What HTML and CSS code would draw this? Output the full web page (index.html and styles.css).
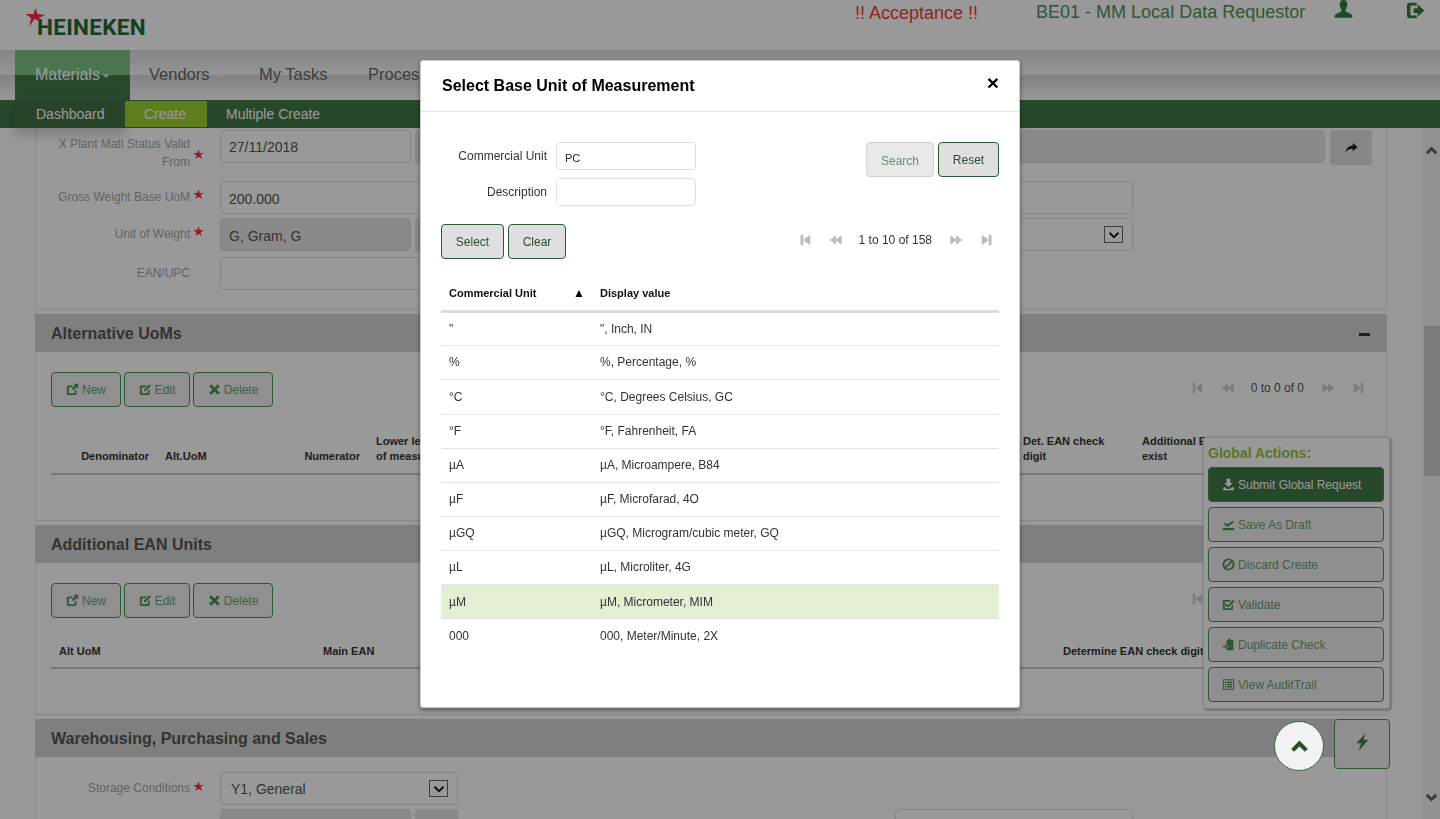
FILE: index.html
```html
<!DOCTYPE html>
<html lang="en">
<head>
    <meta charset="UTF-8">
    <meta name="viewport" content="width=device-width, initial-scale=1.0">
    <title>Select Base Unit of Measurement</title>
    <link rel="stylesheet" href="styles.css">
</head>
<body>
    <svg class="icon-defs" aria-hidden="true">
        <symbol id="i-star" viewBox="0 0 16 16"><path d="M8 .5l1.900 5.300h5.600l-4.500 3.400 1.700 5.500L8 11.400l-4.700 3.300 1.700-5.500L.5 5.800h5.600z"/></symbol>
        <symbol id="i-user" viewBox="0 0 16 16"><path d="M8 0C5.900 0 4.800 1.600 4.800 3.800c0 1.600.6 3.200 1.500 4.100v1.500L1.900 11.700C1 12.200.6 12.900.6 13.600V15h14.800v-1.400c0-.7-.4-1.400-1.300-1.900L9.700 9.400V7.900c.9-.9 1.500-2.500 1.500-4.100C11.200 1.600 10.100 0 8 0z"/></symbol>
        <symbol id="i-logout" viewBox="0 0 16 16"><path d="M3 1.500h6v2.300H4.200c-.3 0-.5.2-.5.5v7.400c0 .3.2.5.5.5H9v2.300H3c-1.300 0-2.200-.9-2.200-2.200V3.700C.8 2.400 1.700 1.500 3 1.500z"/><path d="M6.500 6h3.300V2.800L15.400 8l-5.600 5.200V10H6.500z"/></symbol>
        <symbol id="i-share" viewBox="0 0 16 16"><path d="M9.500 2.500L15.500 7.500l-6 5V9.600C6 9.600 3 10.500.8 13.500 1.300 8.800 4.600 5.800 9.500 5.400z"/></symbol>
        <symbol id="i-new" viewBox="0 0 16 16"><path d="M3 3h5v2.200H3.800c-.3 0-.5.2-.5.5v6.500c0 .3.200.5.500.5h6.500c.3 0 .5-.2.500-.5V9H13v4c0 1-.8 1.700-1.700 1.700H2.800C1.800 14.700 1 14 1 13V5c0-1.100.9-2 2-2z"/><path d="M9 1h6v6l-2-2-4 4-2-2 4-4z"/></symbol>
        <symbol id="i-edit" viewBox="0 0 16 16"><path d="M3 3h7L8 5.200H3.800c-.3 0-.5.2-.5.5v6.500c0 .3.200.5.500.5h6.500c.3 0 .5-.2.500-.5V9.500l2.200-2V13c0 1-.8 1.700-1.700 1.700H2.800C1.800 14.700 1 14 1 13V5c0-1.100.9-2 2-2z"/><path d="M13 1.500l1.800 1.800-6.300 6.300-2.600.8.8-2.600z"/></symbol>
        <symbol id="i-remove" viewBox="0 0 16 16"><path d="M4 1.500L8 5.500l4-4L14.500 4l-4 4 4 4-2.500 2.500-4-4-4 4L1.500 12l4-4-4-4z"/></symbol>
        <symbol id="i-first" viewBox="0 0 16 16"><path d="M3 2h3v12H3zM14 2v12L6 8z"/></symbol>
        <symbol id="i-prev" viewBox="0 0 16 16"><path d="M8 2.500v4.700l6.500-4.700v11L8 8.800v4.700L.8 8z"/></symbol>
        <symbol id="i-next" viewBox="0 0 16 16"><path d="M8 2.500v4.700L1.500 2.500v11L8 8.800v4.700L15.200 8z"/></symbol>
        <symbol id="i-last" viewBox="0 0 16 16"><path d="M13 2h-3v12h3zM2 2v12l8-6z"/></symbol>
        <symbol id="i-import" viewBox="0 0 16 16"><path d="M5.800 1h4.400v5h3L8 11 2.800 6h3z"/><path d="M1.500 11.500h2.300L6 13.500h4l2.200-2h2.300V15h-13z"/></symbol>
        <symbol id="i-saved" viewBox="0 0 16 16"><path d="M1 12.300h14V15H1z"/><path d="M1.800 6.800l2.800-.8 1.700 2 7.500-4.500 1.200 1.300L6.300 11.200z"/></symbol>
        <symbol id="i-ban" viewBox="0 0 16 16"><circle cx="8" cy="8" r="6.300" fill="none" stroke="currentColor" stroke-width="2.400"/><path d="M3.500 11.200L11.200 3.500l1.400 1.400-7.700 7.700z"/></symbol>
        <symbol id="i-check" viewBox="0 0 16 16"><path d="M3 2.500h8.500L9.500 4.700H3.800c-.3 0-.5.2-.5.5v7c0 .3.200.5.500.5h7c.3 0 .5-.2.500-.5V10l2.200-2v5.200c0 .9-.8 1.700-1.700 1.700H2.800c-1 0-1.800-.8-1.800-1.700V4.300C1 3.300 1.800 2.500 3 2.500z"/><path d="M4.500 6.800l2.800 2.100 6.300-6.400 1.900 1.900-8.200 7.400-4.400-3.400z"/></symbol>
        <symbol id="i-clip" viewBox="0 0 16 16"><path d="M7.500 1h3v1.500h2.500c.6 0 1 .4 1 1V14c0 .6-.4 1-1 1H6.500c-.6 0-1-.4-1-1v-2.500H8V9.500H5.500V4c0-.8.400-1.500 1-1.500h1z"/><path d="M1 9.500h3V8l3 2.500L4 13v-1.500H1z"/></symbol>
        <symbol id="i-list" viewBox="0 0 16 16"><path fill-rule="evenodd" d="M1 1.500h14v13H1zM2.200 2.700v10.600h11.600V2.700z"/><path d="M3.500 4.200h1.800V6H3.500zM6.300 4.200h6.200V6H6.300zM3.500 7h1.800v1.800H3.500zM6.300 7h6.200v1.800H6.300zM3.500 9.800h1.800v1.800H3.500zM6.300 9.800h6.200v1.800H6.300z"/></symbol>
        <symbol id="i-flash" viewBox="0 0 16 16"><path d="M11.500 0L3 9h4.200L5 16l8.500-10H9z"/></symbol>
        <symbol id="i-chevron-up" viewBox="0 0 16 16"><path d="M8 3l7 7-2.500 2.500L8 8l-4.500 4.500L1 10z"/></symbol>
        <symbol id="i-chevron-down" viewBox="0 0 16 16"><path d="M8 13L1 6l2.500-2.500L8 8l4.500-4.500L15 6z"/></symbol>
        <symbol id="i-select" viewBox="0 0 16 16"><polyline points="2,5 8,11 14,5" fill="none" stroke="currentColor" stroke-width="2.400"/></symbol>
    </svg>

    <div class="app">
        <header class="top-bar">
            <div class="logo">
                <svg class="logo-star" viewBox="0 0 20 19"><path d="M10 0l2 6 8 1-6 2.500-1 3.500-4-2-5 7.500L5.500 10 0 6l8 0z"/></svg>
                <span class="logo-text">HEINEKEN</span>
            </div>
            <span class="env-label">!! Acceptance !!</span>
            <span class="role-label">BE01 - MM Local Data Requestor</span>
            <svg class="top-icon user-icon"><use href="#i-user"/></svg>
            <svg class="top-icon logout-icon"><use href="#i-logout"/></svg>
        </header>

        <nav class="main-nav">
            <a class="nav-link active">Materials<span class="caret"></span></a>
            <a class="nav-link vendors">Vendors<span class="caret faint"></span></a>
            <a class="nav-link tasks">My Tasks</a>
            <a class="nav-link">Processes</a>
        </nav>

        <nav class="sub-nav">
            <a class="sub-link first">Dashboard</a>
            <a class="sub-link current">Create</a>
            <a class="sub-link">Multiple Create</a>
        </nav>

        <div class="scroll-area">
            <main class="content">
                <section class="panel first-panel">
                    <div class="form-row tall">
                        <label class="form-label">X Plant Matl Status Valid From</label><span class="req"><svg class="star"><use href="#i-star"/></svg></span>
                        <div class="field w-190">27/11/2018</div>
                        <div class="addon"></div>
                        <div class="field locked w-wide"></div>
                        <div class="share-btn"><svg class="icon"><use href="#i-share"/></svg></div>
                    </div>
                    <div class="form-row">
                        <label class="form-label">Gross Weight Base UoM</label><span class="req"><svg class="star"><use href="#i-star"/></svg></span>
                        <div class="field w-full">200.000</div>
                    </div>
                    <div class="form-row">
                        <label class="form-label">Unit of Weight</label><span class="req"><svg class="star"><use href="#i-star"/></svg></span>
                        <div class="field locked w-190">G, Gram, G</div>
                        <div class="addon"></div>
                        <div class="field w-rest"><span class="select-arrow"><svg><use href="#i-select"/></svg></span></div>
                    </div>
                    <div class="form-row last">
                        <label class="form-label">EAN/UPC</label><span class="req"></span>
                        <div class="field w-full-short"></div>
                    </div>
                </section>

                <section>
                    <h2 class="panel-heading">Alternative UoMs<span class="collapse-bar"></span></h2>
                    <div class="panel uom-panel">
                        <div class="toolbar">
                            <div class="btn-group">
                                <a class="btn w-new"><svg class="icon"><use href="#i-new"/></svg>New</a>
                                <a class="btn w-edit"><svg class="icon"><use href="#i-edit"/></svg>Edit</a>
                                <a class="btn w-delete"><svg class="icon"><use href="#i-remove"/></svg>Delete</a>
                            </div>
                            <div class="pager">
                                <svg class="pager-icon"><use href="#i-first"/></svg>
                                <svg class="pager-icon"><use href="#i-prev"/></svg>
                                <span class="pager-text">0 to 0 of 0</span>
                                <svg class="pager-icon"><use href="#i-next"/></svg>
                                <svg class="pager-icon"><use href="#i-last"/></svg>
                            </div>
                        </div>
                        <div class="grid-head uom-head">
                            <span class="right">Denominator</span>
                            <span>Alt.UoM</span>
                            <span class="right">Numerator</span>
                            <span>Lower level unit of measure</span>
                            <span></span>
                            <span>Det. EAN check digit</span>
                            <span>Additional EAN exist</span>
                        </div>
                    </div>
                </section>

                <section>
                    <h2 class="panel-heading">Additional EAN Units</h2>
                    <div class="panel ean-panel">
                        <div class="toolbar">
                            <div class="btn-group">
                                <a class="btn w-new"><svg class="icon"><use href="#i-new"/></svg>New</a>
                                <a class="btn w-edit"><svg class="icon"><use href="#i-edit"/></svg>Edit</a>
                                <a class="btn w-delete"><svg class="icon"><use href="#i-remove"/></svg>Delete</a>
                            </div>
                            <div class="pager">
                                <svg class="pager-icon"><use href="#i-first"/></svg>
                                <svg class="pager-icon"><use href="#i-prev"/></svg>
                                <span class="pager-text">0 to 0 of 0</span>
                                <svg class="pager-icon"><use href="#i-next"/></svg>
                                <svg class="pager-icon"><use href="#i-last"/></svg>
                            </div>
                        </div>
                        <div class="grid-head ean-head">
                            <span>Alt UoM</span>
                            <span>Main EAN</span>
                            <span>Determine EAN check digit</span>
                        </div>
                    </div>
                </section>

                <section>
                    <h2 class="panel-heading">Warehousing, Purchasing and Sales</h2>
                    <div class="panel storage-panel">
                        <div class="form-row">
                            <label class="form-label">Storage Conditions</label><span class="req"><svg class="star"><use href="#i-star"/></svg></span>
                            <div class="field w-238 select-text">Y1, General<span class="select-arrow"><svg><use href="#i-select"/></svg></span></div>
                        </div>
                        <div class="form-row">
                            <label class="form-label"></label><span class="req"></span>
                            <div class="field locked w-190"></div>
                            <div class="addon"></div>
                            <div class="field w-238 far-field"></div>
                        </div>
                    </div>
                </section>
            </main>

            <div class="scrollbar">
                <svg class="scroll-arrow"><use href="#i-chevron-up"/></svg>
                <div class="scroll-thumb"></div>
                <svg class="scroll-arrow down"><use href="#i-chevron-down"/></svg>
            </div>
        </div>

        <aside class="global-actions">
            <div class="actions-title">Global Actions:</div>
            <a class="action-btn primary"><svg class="icon"><use href="#i-import"/></svg>Submit Global Request</a>
            <a class="action-btn"><svg class="icon"><use href="#i-saved"/></svg>Save As Draft</a>
            <a class="action-btn"><svg class="icon"><use href="#i-ban"/></svg>Discard Create</a>
            <a class="action-btn"><svg class="icon"><use href="#i-check"/></svg>Validate</a>
            <a class="action-btn"><svg class="icon"><use href="#i-clip"/></svg>Duplicate Check</a>
            <a class="action-btn"><svg class="icon"><use href="#i-list"/></svg>View AuditTrail</a>
        </aside>
        <a class="flash-btn"><svg><use href="#i-flash"/></svg></a>
    </div>

    <div class="overlay"></div>
    <a class="top-btn"><svg><use href="#i-chevron-up"/></svg></a>

    <div class="modal">
        <div class="modal-header">
            <h3 class="modal-title">Select Base Unit of Measurement</h3>
            <span class="modal-close">×</span>
        </div>
        <div class="modal-body">
            <div class="search-row">
                <div class="search-fields">
                    <div class="search-field">
                        <label>Commercial Unit</label>
                        <div class="search-input">PC</div>
                    </div>
                    <div class="search-field">
                        <label>Description</label>
                        <div class="search-input"></div>
                    </div>
                </div>
                <div class="search-actions">
                    <a class="modal-btn disabled">Search</a>
                    <a class="modal-btn">Reset</a>
                </div>
            </div>
            <div class="select-row">
                <div class="select-actions">
                    <a class="modal-btn w-select">Select</a>
                    <a class="modal-btn w-clear">Clear</a>
                </div>
                <div class="modal-pager">
                    <svg class="pager-icon"><use href="#i-first"/></svg>
                    <svg class="pager-icon"><use href="#i-prev"/></svg>
                    <span class="pager-text">1 to 10 of 158</span>
                    <svg class="pager-icon"><use href="#i-next"/></svg>
                    <svg class="pager-icon"><use href="#i-last"/></svg>
                </div>
            </div>
            <table class="unit-table">
                <thead>
                    <tr>
                        <th class="col-unit">Commercial Unit<span class="sort-mark">▲</span></th>
                        <th>Display value</th>
                    </tr>
                </thead>
                <tbody>
                    <tr><td>"</td><td>", Inch, IN</td></tr>
                    <tr><td>%</td><td>%, Percentage, %</td></tr>
                    <tr class="tall-row"><td>°C</td><td>°C, Degrees Celsius, GC</td></tr>
                    <tr><td>°F</td><td>°F, Fahrenheit, FA</td></tr>
                    <tr><td>µA</td><td>µA, Microampere, B84</td></tr>
                    <tr><td>µF</td><td>µF, Microfarad, 4O</td></tr>
                    <tr><td>µGQ</td><td>µGQ, Microgram/cubic meter, GQ</td></tr>
                    <tr><td>µL</td><td>µL, Microliter, 4G</td></tr>
                    <tr class="selected"><td>µM</td><td>µM, Micrometer, MIM</td></tr>
                    <tr class="end-row"><td>000</td><td>000, Meter/Minute, 2X</td></tr>
                </tbody>
            </table>
        </div>
    </div>
</body>
</html>
```

FILE: styles.css
```css
* {
    margin: 0;
    padding: 0;
    box-sizing: border-box;
}

html, body {
    height: 100%;
    overflow: hidden;
}

body {
    font-family: "Liberation Sans", Arial, sans-serif;
    background-color: #fff;
    color: #555;
    font-size: 12px;
}

.icon-defs {
    position: absolute;
    width: 0;
    height: 0;
}

svg {
    fill: currentColor;
}

.app {
    height: 100%;
    display: flex;
    flex-direction: column;
    position: relative;
}

/* top bar */
.top-bar {
    height: 50px;
    flex: none;
    position: relative;
    display: flex;
    align-items: flex-start;
}

.logo {
    position: relative;
    margin-left: 37px;
    padding-top: 14px;
    width: 110px;
    flex: none;
}

.logo-star {
    position: absolute;
    left: -12px;
    top: 8px;
    width: 21px;
    height: 19px;
    fill: #ff2845;
}

.logo-text {
    font-family: Roboto, "Liberation Sans", sans-serif;
    font-size: 22.5px;
    font-weight: bold;
    letter-spacing: 0.3px;
    line-height: 26px;
    color: #1f6b3a;
}

.env-label {
    margin-left: 708px;
    margin-top: 3px;
    font-size: 18px;
    line-height: 21px;
    color: #f83838;
    white-space: nowrap;
}

.role-label {
    margin-left: 58px;
    margin-top: 2px;
    font-size: 18px;
    line-height: 21px;
    color: #4f8f5c;
    white-space: nowrap;
}

.top-icon {
    color: #2f7a42;
    width: 19px;
    height: 19px;
    flex: none;
}

.user-icon {
    margin-left: 29px;
}

.logout-icon {
    margin-left: 52px;
    margin-top: 1px;
    width: 21px;
}

/* main nav */
.main-nav {
    height: 50px;
    flex: none;
    display: flex;
    padding-left: 15px;
    background: linear-gradient(#dfdfdf, #f8f8f8 50%, #dadada 50%, #fcfcfc);
    white-space: nowrap;
    overflow: hidden;
}

.nav-link {
    font-size: 16.5px;
    line-height: 49px;
    padding: 0 20px;
    color: #666;
    width: 115px;
    flex: none;
}

.nav-link.active {
    font-size: 16px;
    color: #fff;
    background: linear-gradient(#7dc487, #7dc487 50%, #457a4c 50%, #457a4c);
}

.nav-link.vendors {
    padding-left: 19px;
    width: 110px;
}

.nav-link.tasks {
    padding-left: 19px;
    width: 108px;
}

.caret {
    display: inline-block;
    margin-left: 2px;
    vertical-align: middle;
    border-top: 4px solid #ddd;
    border-left: 4px solid transparent;
    border-right: 4px solid transparent;
}

.caret.faint {
    margin-left: 3px;
    border-top-color: #eee;
}

.sub-nav {
    height: 28px;
    flex: none;
    display: flex;
    background-color: #447848;
    white-space: nowrap;
    position: relative;
    z-index: 2;
}

.sub-link {
    font-size: 14px;
    line-height: 28px;
    padding: 0 19px;
    color: #fff;
}

.sub-link.first {
    margin-left: 15px;
    padding-left: 21px;
    padding-right: 21px;
    width: 110px;
    background-color: #417245;
    box-shadow: 0 6px 12px rgba(0,0,0,0.2);
}

.sub-link.current {
    background-color: #9bd032;
    height: 26px;
    line-height: 26px;
    margin-top: 1px;
    width: 82px;
}

/* scrolled page */
.scroll-area {
    flex: 1;
    min-height: 0;
    display: flex;
    overflow: hidden;
}

.content {
    flex: 1;
    min-width: 0;
    padding: 0 36px 0 35px;
}

.panel {
    border: 1px solid #e4e4e4;
    border-top: none;
    padding: 0 15px;
}

.first-panel {
    padding-top: 2px;
    height: 182px;
    margin-bottom: 4px;
}

.form-row {
    display: flex;
    height: 33px;
    margin-bottom: 4px;
}

.form-row.tall {
    height: 47px;
    margin-bottom: 4px;
}

.form-row.last {
    margin-top: 6px;
}

.form-label {
    width: 139px;
    text-align: right;
    line-height: 18px;
    color: #a6a6a6;
    padding-top: 7px;
    flex: none;
}

.form-row.tall .form-label {
    padding-top: 5px;
}

.req {
    width: 30px;
    flex: none;
    padding-left: 3px;
    padding-top: 8px;
}

.form-row.tall .req {
    padding-top: 19px;
    align-self: flex-start;
}

.storage-panel .req {
    padding-top: 9px;
}

.star {
    display: block;
    width: 11px;
    height: 11px;
    color: #ff2845;
}

.field {
    height: 33px;
    flex: none;
    border: 1px solid #e0e0e0;
    border-radius: 4px;
    background-color: #fff;
    font-size: 14px;
    line-height: 33px;
    padding-left: 8px;
    color: #555;
    position: relative;
}

.field.locked {
    background-color: #e6e6e6;
    line-height: 35px;
}

.w-190 {
    width: 191px;
}

.w-full {
    width: 913px;
    line-height: 35px;
}

.w-full-short {
    width: 500px;
}

.w-wide {
    width: 725px;
    flex: 1;
}

.w-rest {
    width: 675px;
}

.w-238 {
    width: 238px;
}

.select-text {
    padding-left: 10px;
}

.far-field {
    margin-left: 437px;
}

.addon {
    width: 43px;
    height: 34px;
    margin-left: 4px;
    flex: none;
    border-radius: 4px;
    background-color: #e6e6e6;
}

.share-btn {
    width: 42px;
    height: 35px;
    margin-left: 5px;
    margin-right: -1px;
    flex: none;
    border-radius: 3px;
    background-color: #e1e1e1;
    color: #222;
    display: flex;
    align-items: center;
    justify-content: center;
}

.share-btn .icon {
    margin: 0;
}

.select-arrow {
    position: absolute;
    right: 9px;
    top: 7px;
    width: 19px;
    height: 17px;
    border: 1px solid #666;
    background-color: #fff;
    color: #111;
    display: flex;
    align-items: center;
    justify-content: center;
}

.select-arrow svg {
    width: 12px;
    height: 12px;
}

.panel-heading {
    height: 38px;
    background-color: #d4d4d4;
    font-size: 16px;
    line-height: 40px;
    padding: 0 16px;
    color: #555;
    position: relative;
}

.collapse-bar {
    position: absolute;
    right: 17px;
    top: 19px;
    width: 11px;
    height: 3px;
    background-color: #333;
}

.uom-panel {
    height: 169px;
    margin-bottom: 4px;
}

.ean-panel {
    height: 152px;
    margin-bottom: 4px;
}

.storage-panel {
    padding-top: 15px;
    height: 100px;
}

.toolbar {
    display: flex;
    justify-content: space-between;
    align-items: center;
    padding-top: 20px;
}

.btn-group {
    display: flex;
    gap: 3px;
}

.btn {
    height: 35px;
    display: flex;
    align-items: center;
    justify-content: center;
    border: 1px solid #4d8f59;
    border-radius: 4px;
    background-color: #f0f0f0;
    color: #6f9a78;
    font-size: 12px;
}

.btn .icon {
    color: #4d8f59;
}

.w-new {
    width: 70px;
}

.w-edit {
    width: 66px;
}

.w-delete {
    width: 80px;
}

.icon {
    width: 13px;
    height: 13px;
    margin-right: 3px;
    flex: none;
}

.pager {
    display: flex;
    align-items: center;
    padding-right: 5px;
    margin-bottom: 4px;
}

.pager-icon {
    width: 14px;
    height: 14px;
    color: #bbb;
    flex: none;
}

.pager .pager-icon {
    color: #d0d0d0;
}

.pager-icon + .pager-icon {
    margin-left: 17px;
}

.pager-text {
    margin: 0 17px 0 16px;
    color: #333;
    font-size: 12px;
    white-space: nowrap;
}

.pager .pager-text {
    color: #555;
}

.grid-head {
    display: grid;
    align-items: end;
    font-size: 11px;
    font-weight: bold;
    line-height: 15px;
    color: #333;
    border-bottom: 2px solid #c8c8c8;
}

.grid-head span {
    padding: 0 8px;
}

.grid-head .right {
    text-align: right;
}

.uom-head {
    grid-template-columns: 106px 125px 86px 105px 542px 119px 110px;
    margin-top: 27px;
    padding-bottom: 9px;
}

.ean-head {
    grid-template-columns: 264px 740px 1fr;
    margin-top: 26px;
    padding-bottom: 8px;
}

.ean-head span:last-child {
    white-space: nowrap;
}

/* page scrollbar */
.scrollbar {
    width: 17px;
    flex: none;
    background-color: #f2f2f2;
    position: relative;
    color: #606060;
}

.scroll-arrow {
    position: absolute;
    left: 2px;
    top: 16px;
    width: 13px;
    height: 13px;
}

.scroll-arrow.down {
    top: auto;
    bottom: 15px;
}

.scroll-thumb {
    position: absolute;
    left: 1px;
    right: 0;
    top: 198px;
    height: 150px;
    background-color: #cdcdcd;
}

/* floating actions */
.global-actions {
    position: absolute;
    left: 1203px;
    top: 437px;
    width: 187px;
    height: 272px;
    padding: 7px 5px 0;
    background-color: #fff;
    border: 1px solid #ddd;
    border-radius: 3px;
    box-shadow: 1px 1px 3px rgba(0,0,0,0.4);
    display: flex;
    flex-direction: column;
    gap: 5px;
}

.actions-title {
    font-size: 14px;
    font-weight: bold;
    line-height: 16px;
    color: #98c040;
    margin-bottom: 1px;
    margin-left: -1px;
}

.action-btn {
    height: 35px;
    flex: none;
    margin-left: -1px;
    display: flex;
    align-items: center;
    padding-left: 13px;
    border: 1px solid #4d8f59;
    border-radius: 4px;
    background-color: #eee;
    color: #6f9a78;
    font-size: 12px;
}

.action-btn .icon {
    color: #4d8f59;
}

.action-btn.primary {
    background-color: #447848;
    color: #fff;
}

.action-btn.primary .icon {
    color: #fff;
}

.flash-btn {
    position: absolute;
    left: 1334px;
    top: 719px;
    width: 56px;
    height: 50px;
    padding-bottom: 4px;
    display: flex;
    align-items: center;
    justify-content: center;
    border: 1px solid #4d8f59;
    border-radius: 4px;
    background-color: #eee;
    color: #447848;
}

.flash-btn svg {
    width: 18px;
    height: 18px;
}

.overlay {
    position: fixed;
    inset: 0;
    z-index: 10;
    background: rgba(0,0,0,0.4);
}

.top-btn {
    position: fixed;
    left: 1274px;
    top: 721px;
    z-index: 11;
    width: 50px;
    height: 50px;
    border-radius: 50%;
    background-color: #f2f2f2;
    border: 1px solid #3d6b45;
    color: #274f2e;
    display: flex;
    align-items: center;
    justify-content: center;
}

.top-btn svg {
    width: 19px;
    height: 19px;
}

/* modal */
.modal {
    position: fixed;
    left: 420px;
    top: 60px;
    z-index: 12;
    width: 600px;
    height: 648px;
    background-color: #fff;
    border: 1px solid #ccc;
    border-radius: 3px;
    box-shadow: 0 2px 5px rgba(0,0,0,0.45);
    color: #333;
}

.modal-header {
    height: 51px;
    border-bottom: 1px solid #e2e2e2;
    padding: 0 20px 0 21px;
    display: flex;
    justify-content: space-between;
    align-items: flex-start;
}

.modal-title {
    font-size: 16px;
    line-height: 50px;
    color: #000;
}

.modal-close {
    font-size: 21px;
    font-weight: bold;
    line-height: 43px;
    color: #000;
}

.modal-body {
    padding: 30px 20px 0;
}

.search-row {
    display: flex;
    justify-content: space-between;
}

.search-fields {
    display: flex;
    flex-direction: column;
    gap: 8px;
}

.search-field {
    display: flex;
    align-items: center;
}

.search-field label {
    width: 106px;
    text-align: right;
    margin-right: 9px;
    color: #333;
}

.search-input {
    width: 140px;
    height: 28px;
    border: 1px solid #e0e0e0;
    border-radius: 4px;
    font-size: 11px;
    line-height: 31px;
    padding-left: 8px;
    color: #222;
}

.search-actions,
.select-actions {
    display: flex;
    gap: 4px;
}

.modal-btn {
    height: 35px;
    display: flex;
    align-items: center;
    justify-content: center;
    border: 1px solid #2a5a32;
    border-radius: 4px;
    background-color: #dfdfdf;
    color: #2d4a30;
    font-size: 12px;
    width: 61px;
}

.modal-btn.disabled {
    width: 68px;
    padding-top: 2px;
    border-color: #d0d0d0;
    background-color: #e8e8e8;
    color: #6f8a72;
}

.modal-btn.w-select {
    width: 63px;
}

.modal-btn.w-clear {
    width: 58px;
}

.select-row {
    display: flex;
    justify-content: space-between;
    margin-top: 18px;
}

.modal-pager {
    display: flex;
    align-items: center;
    height: 31px;
    padding-right: 5px;
}

.unit-table {
    width: 558px;
    margin-top: 17px;
    border-collapse: collapse;
    table-layout: fixed;
    font-size: 12px;
}

.unit-table th {
    height: 35px;
    text-align: left;
    padding: 0 8px;
    font-size: 11px;
    color: #111;
    border-bottom: 3px solid #ddd;
}

.unit-table .col-unit {
    width: 151px;
    position: relative;
}

.sort-mark {
    position: absolute;
    left: 132px;
    top: 10px;
    font-size: 12px;
    color: #000;
}

.unit-table td {
    height: 34px;
    padding: 0 8px;
    border-bottom: 1px solid #e2e2e2;
}

.unit-table .tall-row td {
    height: 35px;
}

.unit-table .selected td,
.unit-table .end-row td {
    padding-top: 2px;
}

.unit-table tbody tr:last-child td {
    border-bottom: none;
}

.unit-table .selected td {
    background-color: #e4eed3;
}
```
